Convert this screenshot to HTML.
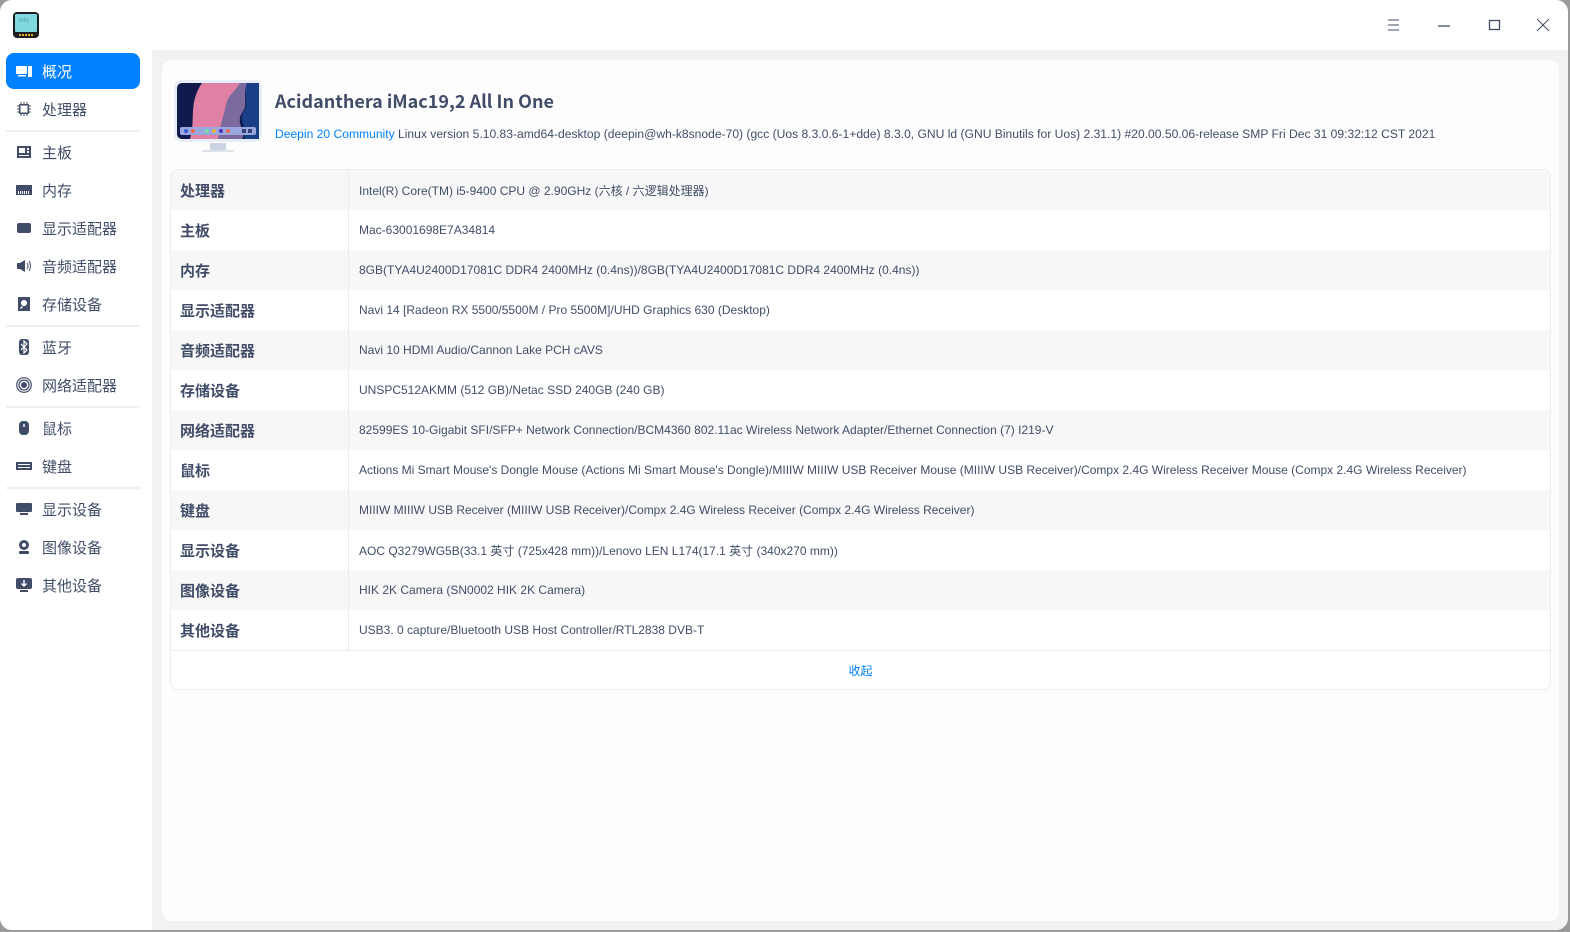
<!DOCTYPE html>
<html><head><meta charset="utf-8"><style>
*{margin:0;padding:0;box-sizing:border-box}
body{width:1570px;height:932px;background:#9a9a9a;font-family:"Liberation Sans","Noto Sans CJK SC",sans-serif;color:#414d68;overflow:hidden;position:relative}
.win{position:absolute;left:0;top:0;width:1568px;height:930px;background:#fff;border-radius:12px;overflow:hidden}
.title{position:absolute;left:0;top:0;width:100%;height:50px;background:#fff}
.main{position:absolute;left:152px;top:50px;right:0;bottom:0;background:#f2f2f2}
.card{position:absolute;left:10px;top:10px;width:1397px;height:861px;background:#fdfdfd;border-radius:10px}
.side{position:absolute;left:0;top:50px;width:152px;bottom:0;background:#fff}
.it{position:absolute;left:6px;width:134px;height:36px;display:flex;align-items:center;font-size:15px;font-family:"Noto Sans CJK SC",sans-serif}
.it svg{width:16px;height:16px;margin-left:10px;margin-right:10px;fill:#414d68}
.it.sel{background:#0081ff;color:#fff;border-radius:8px}
.it.sel svg{fill:#fff}
.sep{position:absolute;left:6px;width:134px;height:2px;background:#f0f0f0}
table{position:absolute;left:170px;top:169px;width:1381px;border-collapse:separate;border-spacing:0;border:1px solid #ececec;border-radius:8px;overflow:hidden}
td{height:40px;font-size:12px;padding-left:10px}
td.l{width:178px;font-weight:bold;font-size:15px;font-family:"Noto Sans CJK SC",sans-serif;border-right:1px solid #ececec;padding-left:9px}
tr:nth-child(odd) td{background:#f7f7f7}
tr:nth-child(even) td{background:#fff}
tr.c td{background:#fff;text-align:center;color:#0081ff;font-family:"Noto Sans CJK SC",sans-serif;border-top:1px solid #ececec;height:39px;padding:0}
.wb{position:absolute;top:18px}
</style></head><body>
<div class="win">
<div class="title">
<svg style="position:absolute;left:12px;top:11px" width="28" height="28" viewBox="0 0 28 28"><rect x="1" y="1" width="26" height="26" rx="4" fill="#1e1e1e"/><rect x="3" y="3" width="22" height="18" rx="1" fill="#7fd8e0"/><text x="7" y="11" font-size="6" fill="#5a9aa8" font-family="Liberation Sans">info</text><g fill="#e0b020"><rect x="7" y="23" width="2" height="2"/><rect x="10" y="23" width="2" height="2"/><rect x="13" y="23" width="2" height="2"/><rect x="16" y="23" width="2" height="2"/><rect x="19" y="23" width="2" height="2"/></g></svg>
<svg class="wb" style="left:1387px" width="14" height="14"><path d="M1 2h11M1 7h11M1 12h11" stroke="#414d68" stroke-width="1"/></svg>
<svg class="wb" style="left:1437px" width="14" height="14"><path d="M1 8h12" stroke="#414d68" stroke-width="1.3"/></svg>
<svg class="wb" style="left:1488px" width="14" height="14"><rect x="1.5" y="2.5" width="10" height="9" fill="none" stroke="#414d68" stroke-width="1.3"/></svg>
<svg class="wb" style="left:1536px" width="14" height="14"><path d="M1 1l12 12M13 1L1 13" stroke="#414d68" stroke-width="1"/></svg>
</div>
<div class="side">
<div class="it sel" style="top:3px"><svg viewBox="0 0 16 16"><rect x="0" y="3" width="11" height="8" rx="1"/><rect x="2" y="12" width="8" height="1.5"/><rect x="12" y="3" width="4" height="11"/></svg>概况</div>
<div class="it" style="top:41px"><svg viewBox="0 0 16 16"><rect x="3" y="3" width="10" height="10" rx="1"/><path d="M5 1v14M8 1v14M11 1v14M1 5h14M1 8h14M1 11h14" stroke="#414d68" stroke-width="1"/><rect x="4.5" y="4.5" width="7" height="7" fill="#fff"/></svg>处理器</div>
<div class="sep" style="top:80px"></div>
<div class="it" style="top:84px"><svg viewBox="0 0 16 16"><path d="M1 2h14v12H1zM3 4v5h6V4zM11 4v2h2V4zM11 7v2h2V7zM3 11v1h10v-1z" fill-rule="evenodd"/></svg>主板</div>
<div class="it" style="top:122px"><svg viewBox="0 0 16 16"><path d="M0 3h16v10H0zM2 9v3h1V9zM4 9v3h1V9zM6 9v3h1V9zM8 9v3h1V9zM10 9v3h1V9zM12 9v3h1V9z" fill-rule="evenodd"/></svg>内存</div>
<div class="it" style="top:160px"><svg viewBox="0 0 16 16"><rect x="1" y="3" width="14" height="10" rx="2"/></svg>显示适配器</div>
<div class="it" style="top:198px"><svg viewBox="0 0 16 16"><path d="M1 5h3l5-3v12l-5-3H1z"/><path d="M11 5q2 3 0 6M13 3q3 5 0 10" stroke="#414d68" fill="none"/></svg>音频适配器</div>
<div class="it" style="top:236px"><svg viewBox="0 0 16 16"><path d="M2 1h12v14H2zM8 4a3 3 0 1 0 .01 0zM4 12l2-2 1 1-2 2z" fill-rule="evenodd"/></svg>存储设备</div>
<div class="sep" style="top:275px"></div>
<div class="it" style="top:279px"><svg viewBox="0 0 16 16"><rect x="3" y="0" width="10" height="16" rx="3"/><path d="M5 5l6 6-3 3V2l3 3-6 6" stroke="#fff" fill="none" stroke-width="1.2"/></svg>蓝牙</div>
<div class="it" style="top:317px"><svg viewBox="0 0 16 16"><circle cx="8" cy="8" r="3"/><circle cx="8" cy="8" r="5" fill="none" stroke="#414d68" stroke-width="1.3"/><circle cx="8" cy="8" r="7.3" fill="none" stroke="#414d68" stroke-width="1.2"/></svg>网络适配器</div>
<div class="sep" style="top:356px"></div>
<div class="it" style="top:360px"><svg viewBox="0 0 16 16"><rect x="3" y="1" width="10" height="14" rx="4"/><rect x="7.3" y="4" width="1.4" height="3" fill="#fff"/></svg>鼠标</div>
<div class="it" style="top:398px"><svg viewBox="0 0 16 16"><path d="M0 4h16v8H0zM2 6v1h12V6zM2 9v1h12V9z" fill-rule="evenodd"/></svg>键盘</div>
<div class="sep" style="top:437px"></div>
<div class="it" style="top:441px"><svg viewBox="0 0 16 16"><rect x="0" y="2" width="16" height="9" rx="1"/><rect x="4" y="12" width="8" height="2"/></svg>显示设备</div>
<div class="it" style="top:479px"><svg viewBox="0 0 16 16"><circle cx="8" cy="6" r="5"/><circle cx="8" cy="6" r="2" fill="#fff"/><rect x="3" y="12" width="10" height="3" rx="1"/></svg>图像设备</div>
<div class="it" style="top:517px"><svg viewBox="0 0 16 16"><rect x="0" y="1" width="16" height="11" rx="2"/><rect x="4" y="13" width="8" height="2"/><path d="M8 3v6M5.5 6.5L8 9l2.5-2.5" stroke="#fff" fill="none" stroke-width="1.4"/></svg>其他设备</div>
</div>
<div class="main"><div class="card"></div></div>
<svg style="position:absolute;left:172px;top:80px" width="92" height="76" viewBox="0 0 92 76"><rect x="2" y="0" width="88" height="62" rx="8" fill="#e8eef8"/><rect x="5" y="3" width="82" height="56" rx="5" fill="#111a4d"/><path d="M30 3h45c-5 15 2 20-5 30s5 20 0 26H18c8-15 -2-30 12-56z" fill="#7a6a9e"/><path d="M30 3h38c-6 10-12 12-14 22s-6 20-8 34H18c6-20-2-35 12-56z" fill="#df80a4"/><path d="M75 3h12v56H72c4-10-6-18 0-28s-2-18 3-28z" fill="#1a3f86"/><rect x="8" y="47" width="76" height="8" rx="2" fill="#9aa6e0"/><g><circle cx="14" cy="51" r="2" fill="#3a5ad0"/><circle cx="21" cy="51" r="2" fill="#f06a50"/><circle cx="35" cy="51" r="2" fill="#70e0a0"/><circle cx="42" cy="51" r="2" fill="#f0b040"/><circle cx="49" cy="51" r="2" fill="#5030c0"/><circle cx="56" cy="51" r="2" fill="#f06a50"/><rect x="70" y="49" width="4" height="4" fill="#334477"/><rect x="76" y="49" width="4" height="4" fill="#334477"/></g><rect x="38" y="63" width="16" height="7" fill="#ccd4e4"/><rect x="30" y="70" width="32" height="2" fill="#dde2ea"/></svg>
<div style="position:absolute;left:275px;top:88px;font-size:18px;font-weight:bold;font-family:'Noto Sans CJK SC',sans-serif;color:#414d68">Acidanthera iMac19,2 All In One</div>
<div style="position:absolute;left:275px;top:127px;font-size:12.1px;white-space:nowrap"><span style="color:#0081ff">Deepin 20 Community</span> Linux version 5.10.83-amd64-desktop (deepin@wh-k8snode-70) (gcc (Uos 8.3.0.6-1+dde) 8.3.0, GNU ld (GNU Binutils for Uos) 2.31.1) #20.00.50.06-release SMP Fri Dec 31 09:32:12 CST 2021</div>
<table>
<tr><td class="l">处理器</td><td>Intel(R) Core(TM) i5-9400 CPU @ 2.90GHz (六核 / 六逻辑处理器)</td></tr>
<tr><td class="l">主板</td><td>Mac-63001698E7A34814</td></tr>
<tr><td class="l">内存</td><td>8GB(TYA4U2400D17081C DDR4 2400MHz (0.4ns))/8GB(TYA4U2400D17081C DDR4 2400MHz (0.4ns))</td></tr>
<tr><td class="l">显示适配器</td><td>Navi 14 [Radeon RX 5500/5500M / Pro 5500M]/UHD Graphics 630 (Desktop)</td></tr>
<tr><td class="l">音频适配器</td><td>Navi 10 HDMI Audio/Cannon Lake PCH cAVS</td></tr>
<tr><td class="l">存储设备</td><td>UNSPC512AKMM (512 GB)/Netac SSD 240GB (240 GB)</td></tr>
<tr><td class="l">网络适配器</td><td>82599ES 10-Gigabit SFI/SFP+ Network Connection/BCM4360 802.11ac Wireless Network Adapter/Ethernet Connection (7) I219-V</td></tr>
<tr><td class="l">鼠标</td><td>Actions Mi Smart Mouse's Dongle Mouse (Actions Mi Smart Mouse's Dongle)/MIIIW MIIIW USB Receiver Mouse (MIIIW USB Receiver)/Compx 2.4G Wireless Receiver Mouse (Compx 2.4G Wireless Receiver)</td></tr>
<tr><td class="l">键盘</td><td>MIIIW MIIIW USB Receiver (MIIIW USB Receiver)/Compx 2.4G Wireless Receiver (Compx 2.4G Wireless Receiver)</td></tr>
<tr><td class="l">显示设备</td><td>AOC Q3279WG5B(33.1 英寸 (725x428 mm))/Lenovo LEN L174(17.1 英寸 (340x270 mm))</td></tr>
<tr><td class="l">图像设备</td><td>HIK 2K Camera (SN0002 HIK 2K Camera)</td></tr>
<tr><td class="l">其他设备</td><td>USB3. 0 capture/Bluetooth USB Host Controller/RTL2838 DVB-T</td></tr>
<tr class="c"><td colspan="2">收起</td></tr>
</table>
</div>
</body></html>
